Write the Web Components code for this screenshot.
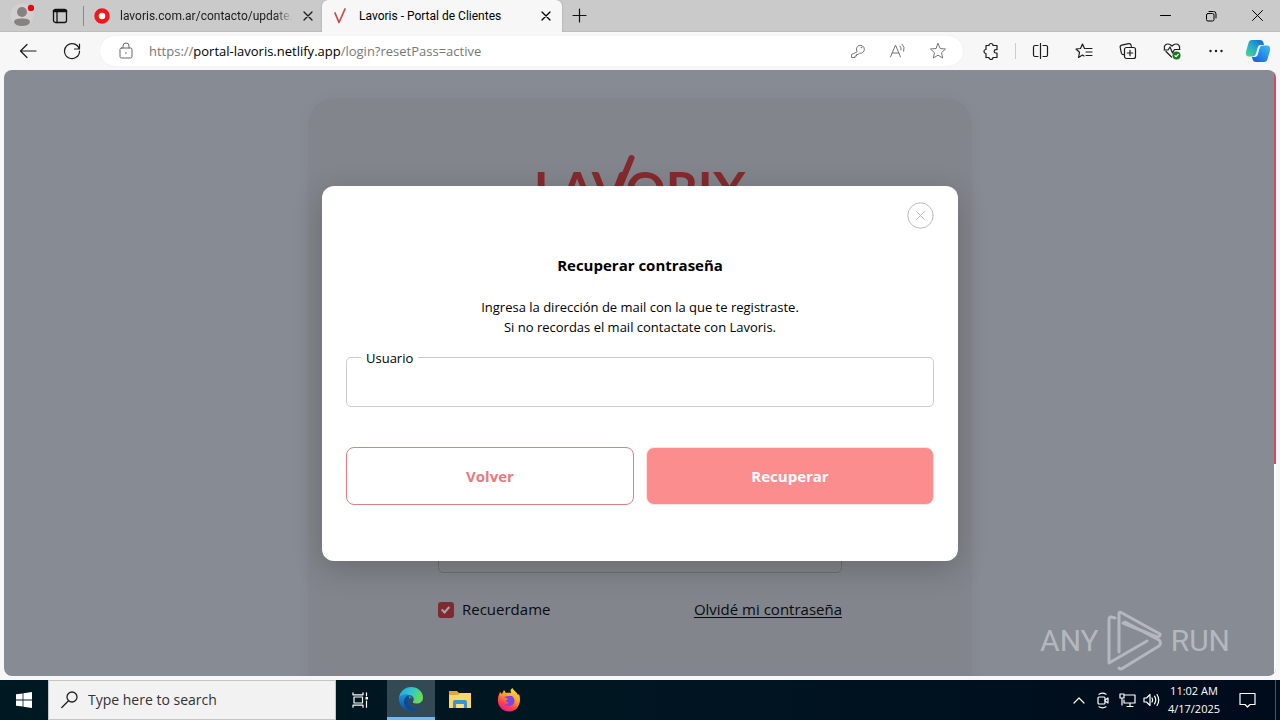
<!DOCTYPE html>
<html lang="es">
<head>
<meta charset="utf-8">
<title>Lavoris - Portal de Clientes</title>
<style>
html, body { margin: 0; height: 100%; }
body { font-family: "Open Sans", "Noto Sans", sans-serif; color: #111; background: #f7f7f7; }
</style>
</head>
<body>
<desktop-screen></desktop-screen>
<script>
const RESET = `<style>
*, *::before, *::after { box-sizing: border-box; }
button { font: inherit; color: inherit; background: none; border: 0; padding: 0; margin: 0; display: grid; place-items: center; }
svg { display: block; stroke-linecap: round; stroke-linejoin: round; }
svg:not([fill]) { fill: none; }
svg:not([stroke]) { stroke: currentColor; }
</style>`;

function define(name, html) {
  const template = document.createElement('template');
  template.innerHTML = RESET + html;
  customElements.define(name, class extends HTMLElement {
    constructor() {
      super();
      this.attachShadow({ mode: 'open' }).append(template.content.cloneNode(true));
    }
  });
}

define('browser-tab', `<style>
:host { display: flex; align-items: center; width: 238px; height: 32px; padding: 0 8px 0 10px; gap: 10px; font: 12px Roboto, "Noto Sans", sans-serif; color: #1b1b1b; }
:host([active]) { width: 240px; padding: 0 10px; gap: 9px; background: #f7f7f7; border-radius: 6px 6px 0 0; box-shadow: 0 0 2px #999; color: #000; }
.title { flex: 1; overflow: hidden; white-space: nowrap; height: 20px; line-height: 20px; }
:host(:not([active])) .title { -webkit-mask-image: linear-gradient(90deg, #000 90%, transparent); mask-image: linear-gradient(90deg, #000 90%, transparent); }
button { width: 12px; height: 16px; }
</style>
<slot name="icon"></slot>
<span class="title"><slot></slot></span>
<button aria-label="Cerrar pestaña"><svg width="10" height="10" viewBox="0 0 10 10" stroke-width="1.3"><path d="M1 1l8 8M9 1l-8 8"/></svg></button>`);

define('tab-strip', `<style>
:host { display: flex; align-items: center; height: 32px; background: #cacaca; border-bottom: 1px solid #bdbdbd; padding-left: 3px; }
.tool { width: 38px; height: 32px; }
.divider { width: 1px; height: 20px; background: #888; margin: 0 0 0 4px; }
.plus { width: 34px; height: 32px; }
.space { flex: 1; }
.win { width: 46px; height: 32px; }
</style>
<button class="tool" aria-label="Perfil"><svg width="24" height="26" viewBox="0 0 24 26" stroke="none"><circle cx="12" cy="12" r="11.500" fill="#d3d1cf"/><circle cx="12" cy="9" r="5" fill="#858280"/><path d="M4 19c0-3 4-3.500 8-3.500s8 .5 8 3.500c-1 3-4 4-8 4s-7-1-8-4z" fill="#858280"/><circle cx="21" cy="5" r="3.200" fill="#e30b17"/></svg></button>
<button class="tool" aria-label="Áreas de trabajo"><svg width="16" height="16" viewBox="0 0 16 16" stroke="#111" stroke-width="1.300"><rect x="1.500" y="1.500" width="13" height="13" rx="2"/><path d="M2 3h12" stroke-width="2.600"/><path d="M5 4v10.500"/></svg></button>
<span class="divider"></span>
<browser-tab>lavoris.com.ar/contacto/update/<svg slot="icon" width="16" height="16" viewBox="0 0 16 16"><circle cx="8" cy="8" r="5.500" fill="#fff" stroke="#f5141e" stroke-width="4.400"/></svg></browser-tab>
<browser-tab active>Lavoris - Portal de Clientes<svg slot="icon" width="18" height="18" viewBox="0 0 18 18" fill="none"><path d="M3 6l4 9.500L13 2" stroke="#c9504f" stroke-width="1.800" stroke-linecap="round"/></svg></browser-tab>
<button class="plus" aria-label="Nueva pestaña"><svg width="15" height="15" viewBox="0 0 15 15" stroke="#111" stroke-width="1.200"><path d="M7.500 1v13M1 7.500h13"/></svg></button>
<span class="space"></span>
<button class="win" aria-label="Minimizar"><svg width="11" height="11" viewBox="0 0 11 11" stroke="#000"><path d="M.5 5.500h10"/></svg></button>
<button class="win" aria-label="Restaurar"><svg width="12" height="12" viewBox="0 0 12 12" stroke="#000"><rect x="1.500" y="3.500" width="7.500" height="7.500" rx="1.500"/><path d="M4 1.500h4.500a2.500 2.500 0 0 1 2.500 2.500v4"/></svg></button>
<button class="win" aria-label="Cerrar"><svg width="11" height="11" viewBox="0 0 11 11" stroke="#000"><path d="M.5.5l10 10M10.500.5l-10 10"/></svg></button>`);

define('address-bar', `<style>
:host { display: flex; align-items: center; flex: 1; height: 30px; min-width: 0; background: #fff; border-radius: 15px; padding: 0 5px 0 18px; box-shadow: 0 0 1px #ddd; font-size: 13px; color: #777; }
.lock { width: 16px; height: 20px; margin-right: 15px; color: #666; }
.url { flex: 1; line-height: 20px; white-space: nowrap; overflow: hidden; }
b { font-weight: 400; color: #000; }
.act { width: 40px; height: 30px; color: #777; }
</style>
<button class="lock" aria-label="Información del sitio"><svg width="14" height="18" viewBox="0 0 14 18"><rect x="1" y="6" width="12" height="10" rx="1.500"/><path d="M4 6V4a3 3 0 0 1 6 0v2"/><circle cx="7" cy="11" r=".8" fill="currentColor" stroke="none"/></svg></button>
<div class="url" role="textbox" aria-label="Dirección">https://<b>portal-lavoris.netlify.app</b>/login?resetPass=active</div>
<button class="act" aria-label="Contraseñas"><svg width="16" height="16" viewBox="0 0 16 16"><path d="M7 8.500a4 4 0 1 1 2.500 1.700L8 11.500H6.500V13H5v1.500H1.500v-2.500z"/><circle cx="11.500" cy="4.500" r=".8" fill="currentColor" stroke="none"/></svg></button>
<button class="act" aria-label="Leer en voz alta"><svg width="18" height="16" viewBox="0 0 18 16"><path d="M1.500 14L6.500 2l5 12M3.200 10h6.600M11 3q1.700 1.700 1 4M13.200 1.200q3 3 1.500 7"/></svg></button>
<button class="act" aria-label="Favorito"><svg width="18" height="18" viewBox="0 0 18 18"><path d="M9 1.500l2.200 5 5.300.5-4 3.700 1.200 5.300L9 13.200 4.300 16l1.200-5.300-4-3.700 5.300-.5z"/></svg></button>`);

define('browser-toolbar', `<style>
:host { display: flex; align-items: center; height: 38px; background: #f7f7f7; padding: 0 2px 0 6px; color: #1c1c1c; }
button { width: 44px; height: 38px; }
address-bar { margin: 0 6px; }
.divider { width: 1px; height: 16px; background: #ccc; margin: 0 2px; }
.copilot { width: 40px; }
</style>
<button aria-label="Atrás"><svg width="18" height="16" viewBox="0 0 18 16" stroke-width="1.200"><path d="M17 8H1.500M8 1.500L1.500 8 8 14.500"/></svg></button>
<button aria-label="Actualizar"><svg width="18" height="18" viewBox="0 0 18 18" stroke-width="1.200"><path d="M16.200 7A7.500 7.500 0 1 0 16.500 9M16.500 2v5h-5"/></svg></button>
<address-bar></address-bar>
<button aria-label="Extensiones"><svg width="18" height="18" viewBox="0 0 18 18" stroke-width="1.200"><path d="M4 3.500h3a2 2 0 0 1 4 0h4v4.200h-1.200a1.600 1.600 0 0 0 0 3.300H15v4.500h-4a2 2 0 0 1-4 0H4V11.500a2 2 0 0 1 0-4z"/></svg></button>
<span class="divider"></span>
<button aria-label="Pantalla dividida"><svg width="17" height="16" viewBox="0 0 17 16" stroke-width="1.200"><path d="M6 2.500H3A1.500 1.500 0 0 0 1.500 4v8A1.500 1.500 0 0 0 3 13.500h3M11 2.500h3A1.500 1.500 0 0 1 15.500 4v8a1.500 1.500 0 0 1-1.500 1.500h-3M8.500.5v15"/></svg></button>
<button aria-label="Favoritos"><svg width="18" height="16" viewBox="0 0 18 16" stroke-width="1.200"><path d="M9.500 5.500L7.500 1 5.500 5.500 1 6l3.500 3.300L3.500 14.500l4-2.500 1.500 1M10.500 5.500H17M11 9h6M11 12.500h6"/></svg></button>
<button aria-label="Colecciones"><svg width="18" height="18" viewBox="0 0 18 18" stroke-width="1.200"><path d="M5 12.500l-1 .1a2 2 0 0 1-1.600-1.400L1.200 5.500a2 2 0 0 1 1.500-2.300l7-1.600A2 2 0 0 1 12 3l.3 1.500"/><rect x="5.500" y="5.500" width="11" height="11" rx="2"/><path d="M11 8.300v5.400M8.300 11h5.400"/></svg></button>
<button aria-label="Rendimiento"><svg width="18" height="18" viewBox="0 0 18 18" stroke-width="1.200"><path d="M8.500 15L3 9.500M1.500 7C.5 3.500 3 2 5 2c2 0 3 1 4 2 1-1 2-2 4-2s4.300 1.500 3.500 5M1 8h4l2-3 2.500 6 2-3.500H17"/><circle cx="13.500" cy="13.500" r="4" fill="#187a1c" stroke="none"/><path d="M12 13.700l1.200 1 2-2.400" stroke="#fff"/></svg></button>
<button aria-label="Configuración y más"><svg width="16" height="4" viewBox="0 0 16 4" fill="#1c1c1c" stroke="none"><circle cx="2.500" cy="2" r="1.200"/><circle cx="8" cy="2" r="1.200"/><circle cx="13.500" cy="2" r="1.200"/></svg></button>
<button class="copilot" aria-label="Copilot"><svg width="26" height="24" viewBox="0 0 26 24" stroke="none"><defs><linearGradient id="a" x1="0" y1="1" x2="1" y2="0"><stop offset="0" stop-color="#52d78a"/><stop offset=".5" stop-color="#24a9d0"/><stop offset="1" stop-color="#1463d2"/></linearGradient><linearGradient id="b" x1="0" y1="1" x2="1" y2="0"><stop offset="0" stop-color="#1a55e0"/><stop offset="1" stop-color="#35c3f3"/></linearGradient></defs><path d="M7 1h8c2 0 3 1 3.500 3l.5 2h-3c-2 0-3 1-3.500 3l-1.300 5c-.6 2.500-2 3.500-4 3.500H4C1 17.500.5 15 1 12.500L3.500 4C4 2 5 1 7 1z" fill="url(#a)"/><path d="M19 23h-8c-2 0-3-1-3.500-3L7 18h2.500c2 0 3-1 3.500-3l1.300-5c.6-2.500 2-3.500 4-3.500H22c3 0 3.500 2.500 3 5L22.500 20c-.5 2-1.500 3-3.500 3z" fill="url(#b)"/></svg></button>`);

define('lavoris-logo', `<style>
:host { display: block; position: relative; width: max-content; margin: 0 auto; font: 700 50px/70px Lato, sans-serif; color: #842a2e; }
svg { position: absolute; left: 72px; top: 0; }
</style>
<span>LAVORIX</span><svg width="32" height="54" viewBox="0 0 32 54" stroke-width="6"><path d="M25.500 4L8 46"/></svg>`);

define('login-card', `<style>
:host { display: block; width: 664px; max-width: 100%; margin: 0 auto; padding: 56px 130px 120px; background: #82868c; border-radius: 28px; box-shadow: 0 0 10px #82868c; }
form { display: grid; gap: 30px; padding-top: 219px; }
.field { width: 100%; height: 50px; border: 1px solid #6c7076; border-radius: 5px; background: transparent; }
.row { display: flex; justify-content: space-between; align-items: center; font-size: 15px; line-height: 20px; color: #090b0e; margin-top: -4px; }
label { display: flex; align-items: center; gap: 8px; }
.tick { appearance: none; position: relative; width: 16px; height: 16px; margin: 2px 0 0; border-radius: 3px; background: #7f2a31; }
.tick::after { content: ""; position: absolute; left: 5px; top: 3px; width: 5px; height: 8px; border: solid #a9a4a9; border-width: 0 2px 2px 0; transform: rotate(42deg); }
a { color: inherit; text-underline-offset: 2px; }
</style>
<lavoris-logo></lavoris-logo>
<form>
<input class="field" type="email" aria-label="Usuario">
<input class="field" type="password" aria-label="Contraseña">
<div class="row"><label><input class="tick" type="checkbox" checked>Recuerdame</label><a href="#">Olvidé mi contraseña</a></div>
</form>`);

define('recover-dialog', `<style>
:host { display: block; width: 50%; min-width: 480px; padding: 16px 24px 56px; background: #fff; border-radius: 12px; box-shadow: 0 8px 30px rgba(0,0,0,.2); color: #000; }
.close { width: 27px; height: 27px; margin-left: auto; color: #bbb; }
h1 { margin: 24px 0 20px; font-size: 15px; line-height: 24px; font-weight: 700; text-align: center; }
p { margin: 0 0 20px; font-size: 13px; line-height: 20px; text-align: center; }
.field { position: relative; margin-bottom: 40px; }
label { position: absolute; left: 15px; top: -9px; padding: 0 5px; background: #fff; font-size: 13px; line-height: 20px; }
input { display: block; width: 100%; height: 50px; border: 1px solid #ccc; border-radius: 5px; font: inherit; padding: 0 16px; }
.actions { display: grid; grid-template-columns: 1fr 1fr; gap: 12px; }
.actions button { height: 58px; border-radius: 8px; font-size: 15px; font-weight: 700; border: 1px solid #dc7f82; color: #e8797c; }
.actions .main { background: #fb8d8e; border-color: #fde3e3; color: #fff; }
</style>
<button class="close" aria-label="Cerrar"><svg width="27" height="27" viewBox="0 0 27 27"><circle cx="13.500" cy="13.500" r="12.700"/><path d="M9.500 9.500l8 8M17.500 9.500l-8 8"/></svg></button>
<h1>Recuperar contraseña</h1>
<p>Ingresa la dirección de mail con la que te registraste.<br>Si no recordas el mail contactate con Lavoris.</p>
<div class="field"><label for="user">Usuario</label><input id="user" type="email"></div>
<div class="actions"><button type="button">Volver</button><button type="button" class="main">Recuperar</button></div>`);

define('recording-mark', `<style>
:host { display: flex; align-items: center; gap: 8px; font: 400 30px/61px Roboto, sans-serif; color: #b4b8be; pointer-events: none; }
</style>
<span>ANY</span>
<svg width="56" height="61" viewBox="0 0 56 61" stroke-width="3"><path d="M8 8L4 7Q2 7 2 10V53L40 31M12 42V4Q12 1 15 3L53 24Q54 26 50 27L16 13M12 58Q13 60 16 58L52 36Q55 33 52 30L18 12"/></svg>
<span>RUN</span>`);

define('portal-view', `<style>
:host { display: grid; grid-template-columns: 1fr 2px; grid-template-rows: 100%; position: relative; overflow: hidden; flex: 1; min-height: 0; margin: 0 4px 4px; border-radius: 8px; background: #878b93; }
.page { padding: 28px 0 0 2px; overflow: hidden; }
.track { background: #fff; }
.thumb { height: 65%; background: #c9506c; }
.overlay { position: absolute; inset: 0; display: grid; place-items: center; }
recording-mark { position: absolute; right: 46px; bottom: 5px; }
</style>
<div class="page"><login-card></login-card></div>
<div class="track"><div class="thumb"></div></div>
<div class="overlay"><recover-dialog role="dialog" aria-modal="true"></recover-dialog></div>
<recording-mark></recording-mark>`);

define('task-bar', `<style>
:host { display: flex; align-items: center; height: 40px; background: linear-gradient(90deg, #001822, #001722 45%, #000b1c); color: #fff; }
.app { width: 48px; height: 40px; margin-right: 1px; }
.start { margin: 0; }
.view { margin-right: 3px; }
.current { background: #334a54; border-bottom: 3px solid #76b9ed; }
.search { display: flex; align-items: center; gap: 10px; width: 288px; height: 40px; padding-left: 12px; background: #f2f2f2; border: 1px solid #c5c5c5; color: #222; }
input { flex: 1; min-width: 0; border: 0; background: none; padding: 0; font: 14px/20px "Open Sans", sans-serif; outline: 0; }
input::placeholder { color: #333; opacity: 1; }
.space { flex: 1; }
.tray { width: 24px; height: 40px; }
.clock { width: 62px; text-align: center; font-size: 11px; line-height: 18px; }
.note { width: 44px; height: 40px; }
.desk { width: 5px; height: 40px; margin-left: 6px; border-left: 1px solid #4a5561; }
</style>
<button class="app start" aria-label="Inicio"><svg width="16" height="16" viewBox="0 0 16 16" stroke="none"><path fill="#fff" d="M0 2.300L6.600 1.400v6.200H0zM7.400 1.300L16 0v7.600H7.400zM0 8.400h6.600v6.200L0 13.700zM7.400 8.400H16V16l-8.600-1.300z"/></svg></button>
<div class="search"><svg width="17" height="18" viewBox="0 0 17 18" stroke-width="1.300"><circle cx="11" cy="6" r="5"/><path d="M7.500 9.700L.8 16.500"/></svg><input type="search" aria-label="Buscar" placeholder="Type here to search"></div>
<button class="app view" aria-label="Vista de tareas"><svg width="17" height="16" viewBox="0 0 17 16" stroke-width="1.200"><path d="M1 .8v2h10v-2M1 15.200v-2h10v2M2 5h8.500v6H2zM14.500.8v3M14.500 9v6.200"/><path d="M13.500 5h2.500v2.500h-2.500z" fill="#fff" stroke="none"/></svg></button>
<button class="app current" aria-label="Microsoft Edge"><svg width="24" height="24" viewBox="0 0 24 24" stroke="none"><defs><linearGradient id="e" x1="0" y1="0" x2="1" y2=".4"><stop offset="0" stop-color="#269fd9"/><stop offset=".5" stop-color="#2fc5cf"/><stop offset="1" stop-color="#66dc5a"/></linearGradient><linearGradient id="f" x1="0" y1="0" x2="0" y2="1"><stop offset="0" stop-color="#1b93dd"/><stop offset="1" stop-color="#0c4fa8"/></linearGradient></defs><path d="M0 11C1 4 6 0 12 0c7 0 12 5 12 10.500 0 4-3 6-6.500 6-3 0-4-1-3.500-2 2-3 0-6-4-6.500C6 7 2 8 0 11z" fill="url(#e)"/><path d="M0 11c2-3.500 6-4.500 9.500-3 2 .8 3.500 2 4 4-1-1-2.500-1-3.500 0-2 3 0 7.500 4 8.500 3 .8 5.500 0 8-1.500-2.500 3.500-6 5-10 5C5 24-.5 18 0 11z" fill="url(#f)"/><path d="M9.500 8c-5 2-6 9-2 13 1.500 1.500 3.500 2.500 5.500 2.900 3.800 0 7-1.900 9-4.900-2.500 1.500-5 2.300-8 1.500-4-1-6-5.500-4-8.500z" fill="#114a8b"/></svg></button>
<button class="app" aria-label="Explorador de archivos"><svg width="22" height="20" viewBox="0 0 22 20" stroke="none"><path d="M0 1h8l2 2h11v15H0z" fill="#e8a33a"/><path d="M0 5h9l2-2h11v15H0z" fill="#fbd766"/><path d="M4 18v-6q0-2 2-2h10q2 0 2 2v6h-3v-4H7v4z" fill="#3a94cf"/><path d="M8 14h6v4H8z" fill="#fbe28a"/></svg></button>
<button class="app" aria-label="Firefox"><svg width="24" height="24" viewBox="0 0 24 24" stroke="none"><defs><linearGradient id="g" x1=".8" y1="0" x2=".3" y2="1"><stop offset="0" stop-color="#ffe747"/><stop offset=".45" stop-color="#ff9a1f"/><stop offset=".75" stop-color="#ff3b52"/><stop offset="1" stop-color="#e61f8d"/></linearGradient></defs><path d="M3 4l2 2 2-4 2 3c2-.5 3.500-.3 5 0l-.5-3 2-2c1 3 4 3.500 5.500 7l1-1c3 8-1 17.500-10 17.500C4 23.500-1 15.500 1.500 8z" fill="url(#g)"/><path d="M7 9l4-1 4 0c2.500 2 3.500 5.500 1.500 8-2 2.400-6.500 2.500-8.500 0 2 .5 3-.5 4-1.500-2 0-3-.5-3-2l2-1.500z" fill="#7646e8"/></svg></button>
<span class="space"></span>
<button class="tray" aria-label="Mostrar iconos ocultos"><svg width="12" height="8" viewBox="0 0 12 8" stroke-width="1.200"><path d="M1 7l5-5 5 5"/></svg></button>
<button class="tray" aria-label="Cámara"><svg width="12" height="17" viewBox="0 0 12 17" stroke-width="1.200"><rect x="1" y="5" width="7" height="7" rx="1"/><path d="M8 8l3-2v5l-3-2M2 2.200q3.500-2 7 0M2 14.800q3.500 2 7 0"/></svg></button>
<button class="tray" aria-label="Red"><svg width="17" height="15" viewBox="0 0 17 15" stroke-width="1.200"><path d="M6 2h10v8H5V7M8 13.500h6M11 10v3.500M1 1h4v4H1zM3 5v7"/></svg></button>
<button class="tray" aria-label="Volumen"><svg width="17" height="14" viewBox="0 0 17 14" stroke-width="1.200"><path d="M1 5h2.500L7 1.500v11L3.500 9H1zM9 5q1.200 2 0 4M11.500 3.200q2.500 3.800 0 7.600M14 1.500q3.500 5.500 0 11"/></svg></button>
<div class="clock">11:02 AM<br>4/17/2025</div>
<button class="note" aria-label="Notificaciones"><svg width="17" height="17" viewBox="0 0 17 17" stroke-width="1.200"><path d="M1 1.500h15v11h-5L8.500 15 6 12.500H1z"/></svg></button>
<span class="desk"></span>`);

define('desktop-screen', `<style>
:host { display: flex; flex-direction: column; height: 100vh; overflow: hidden; background: #f7f7f7; }
tab-strip, browser-toolbar, task-bar { flex-shrink: 0; }
</style>
<tab-strip></tab-strip>
<browser-toolbar></browser-toolbar>
<portal-view></portal-view>
<task-bar></task-bar>`);
</script>
</body>
</html>
